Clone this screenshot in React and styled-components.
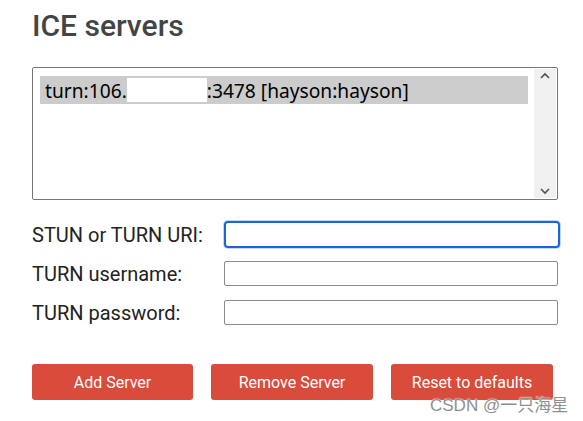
import React from 'react';
import styled, { createGlobalStyle } from 'styled-components';

const GlobalStyle = createGlobalStyle`
  html, body {
    margin: 0;
    padding: 0;
    background: #ffffff;
  }
  body {
    font-family: Roboto, "Liberation Sans", sans-serif;
  }
`;

const Page = styled.div`
  position: relative;
  width: 583px;
  height: 421px;
  padding: 0 0 0 32px;
  box-sizing: border-box;
  overflow: hidden;
`;

const Heading = styled.h2`
  margin: 0;
  padding: 7px 0 0 0;
  font-family: Roboto, "Liberation Sans", sans-serif;
  font-weight: 500;
  font-size: 30px;
  line-height: 37px;
  color: #444444;
`;

const ListBox = styled.div`
  display: flex;
  margin-top: 23px;
  width: 526px;
  height: 133px;
  border: 1px solid #767676;
  border-radius: 2px;
  box-sizing: border-box;
  background: #fff;
`;

const Options = styled.div`
  flex: 1;
  padding: 8px 6px 0 7px;
`;

const Option = styled.div`
  height: 28px;
  padding-left: 5px;
  display: flex;
  align-items: center;
  background: ${(p) => (p.selected ? '#cccccc' : 'transparent')};
  font-family: "Noto Sans", "Open Sans", sans-serif;
  font-size: 19.2px;
  color: #000;
  white-space: nowrap;
`;

const Redacted = styled.span`
  display: inline-block;
  width: 80px;
  height: 24px;
  background: #ffffff;
`;

const Scrollbar = styled.div`
  width: 22px;
  background: #f0f0f0;
  display: flex;
  flex-direction: column;
  justify-content: space-between;
  align-items: center;
  padding: 3px 0;
  margin: 1px 1px 1px 0;
`;

const Arrow = styled.svg`
  width: 10px;
  height: 8px;
  color: #505050;
`;

const Form = styled.div`
  display: flex;
  flex-direction: column;
  gap: 14px;
  margin-top: 22px;
`;

const Row = styled.div`
  display: flex;
  align-items: center;
`;

const Label = styled.label`
  width: 192px;
  font-family: Roboto, "Liberation Sans", sans-serif;
  font-size: 20px;
  color: #222;
`;

const Input = styled.input`
  width: 334px;
  height: 25px;
  box-sizing: border-box;
  border: 1px solid #8a8a96;
  border-radius: 2px;
  outline: none;
  font-size: 15px;
  padding: 0 4px;
  ${(p) =>
    p.focused &&
    `
    border: 2px solid #1a66d6;
    border-radius: 4px;
    height: 27px;
    width: 336px;
    margin: -1px 0;
    box-shadow: 0 0 0 1px #c2d6f5;
  `}
`;

const Buttons = styled.div`
  display: flex;
  gap: 18px;
  margin-top: 39px;
`;

const Button = styled.button`
  width: ${(p) => p.w}px;
  height: 36px;
  border: none;
  border-radius: 3px;
  background: #d94b3a;
  color: #ffffff;
  font-family: Roboto, "Liberation Sans", sans-serif;
  font-size: 16px;
  padding: 0;
  cursor: pointer;
`;

const Watermark = styled.div`
  position: absolute;
  left: 430px;
  top: 391px;
  font-family: "Liberation Sans", "Noto Sans CJK SC", sans-serif;
  font-size: 17px;
  color: #8f8f8f;
  text-shadow: 0 0 2px #ffffff, 0 0 1px #ffffff;
`;

export default function App() {
  return (
    <Page>
      <GlobalStyle />
      <Heading>ICE servers</Heading>
      <ListBox>
        <Options>
          <Option selected>
            turn:106.<Redacted />:3478 [hayson:hayson]
          </Option>
        </Options>
        <Scrollbar>
          <Arrow viewBox="0 0 10 8">
            <path d="M1 6 L5 2 L9 6" fill="none" stroke="currentColor" strokeWidth="1.6" />
          </Arrow>
          <Arrow viewBox="0 0 10 8">
            <path d="M1 2 L5 6 L9 2" fill="none" stroke="currentColor" strokeWidth="1.6" />
          </Arrow>
        </Scrollbar>
      </ListBox>
      <Form>
        <Row>
          <Label>STUN or TURN URI:</Label>
          <Input focused />
        </Row>
        <Row>
          <Label>TURN username:</Label>
          <Input />
        </Row>
        <Row>
          <Label>TURN password:</Label>
          <Input type="password" />
        </Row>
      </Form>
      <Buttons>
        <Button w={161}>Add Server</Button>
        <Button w={162}>Remove Server</Button>
        <Button w={162}>Reset to defaults</Button>
      </Buttons>
      <Watermark>CSDN @一只海星</Watermark>
    </Page>
  );
}
